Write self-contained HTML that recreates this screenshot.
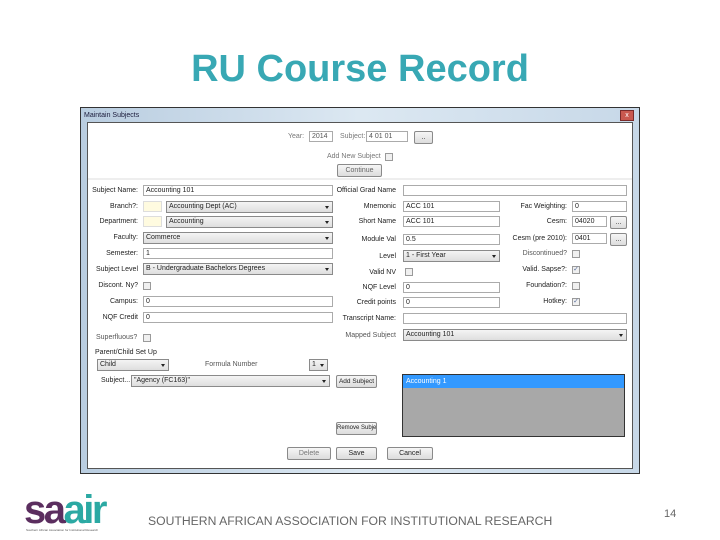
<!DOCTYPE html>
<html><head><style>
body{margin:0;width:720px;height:540px;background:#fff;position:relative;overflow:hidden;font-family:"Liberation Sans",sans-serif}
.a{position:absolute}
.t{position:absolute;font-size:7px;color:#222;white-space:nowrap;line-height:8px}
.r{text-align:right}
.i{position:absolute;border:1px solid #ababab;background:#fff;height:11px;box-sizing:border-box;font-size:7px;line-height:9px;padding-left:2px;color:#222;white-space:nowrap;overflow:hidden}
.s{position:absolute;border:1px solid #8a8a8a;background:linear-gradient(#f4f4f4,#dedede);height:12px;box-sizing:border-box;font-size:7px;line-height:10px;padding-left:2px;color:#222;white-space:nowrap;overflow:hidden}
.s:after{content:"";position:absolute;right:3px;top:4px;border-left:2.5px solid transparent;border-right:2.5px solid transparent;border-top:3px solid #222}
.b{position:absolute;border:1px solid #8a8a8a;border-radius:2px;background:linear-gradient(#f6f6f6,#dcdcdc);height:13px;box-sizing:border-box;font-size:7px;line-height:11px;text-align:center;color:#222;white-space:nowrap;overflow:hidden}
.c{position:absolute;width:8px;height:8px;border:1px solid #9a9a9a;background:#f0f0f0;box-sizing:border-box;font-size:7px;line-height:6px;text-align:center;color:#5a6e9a}
</style></head><body>
<div class="a" style="left:0;top:48px;width:720px;text-align:center;font-size:38px;font-weight:bold;color:#38a8b4">RU Course Record</div>

<!-- window -->
<div class="a" style="left:80px;top:107px;width:560px;height:367px;background:linear-gradient(90deg,#b9cde0,#dce8f2 50%,#c7d8e8);border:1px solid #333;box-sizing:border-box"></div>
<div class="t" style="left:84px;top:112px;color:#1a1a3a">Maintain Subjects</div>
<div class="a" style="left:620px;top:110px;width:14px;height:11px;background:#c9584f;border:1px solid #7a2a2a;box-sizing:border-box;color:#fff;font-size:7px;line-height:9px;text-align:center">x</div>
<div class="a" style="left:87px;top:122px;width:546px;height:347px;background:#fff;border:1px solid #555;box-sizing:border-box"></div>
<div class="a" style="left:88px;top:178px;width:544px;height:2px;background:#eee"></div>

<div class="t" style="left:288px;top:133px;color:#777">Year:</div>
<div class="i" style="left:309px;top:131px;width:24px;color:#555">2014</div>
<div class="t" style="left:340px;top:133px;color:#777">Subject:</div>
<div class="i" style="left:366px;top:131px;width:42px;color:#555">4 01 01</div>
<div class="b" style="left:414px;top:131px;width:19px">..</div>
<div class="t" style="left:327px;top:153px;color:#777">Add New Subject</div>
<div class="c" style="left:385px;top:153px"></div>
<div class="b" style="left:337px;top:164px;width:45px;color:#666">Continue</div>

<!-- left column -->
<div class="t r" style="left:88px;width:50px;top:187px">Subject Name:</div>
<div class="i" style="left:143px;top:185px;width:190px">Accounting 101</div>
<div class="t r" style="left:88px;width:50px;top:203px">Branch?:</div>
<div class="a" style="left:143px;top:201px;width:19px;height:11px;background:#fffbe0;border:1px solid #ddd;box-sizing:border-box"></div>
<div class="s" style="left:166px;top:201px;width:167px">Accounting Dept (AC)</div>
<div class="t r" style="left:88px;width:50px;top:218px">Department:</div>
<div class="a" style="left:143px;top:216px;width:19px;height:11px;background:#fffbe0;border:1px solid #ddd;box-sizing:border-box"></div>
<div class="s" style="left:166px;top:216px;width:167px">Accounting</div>
<div class="t r" style="left:88px;width:50px;top:234px">Faculty:</div>
<div class="s" style="left:143px;top:232px;width:190px">Commerce</div>
<div class="t r" style="left:88px;width:50px;top:250px">Semester:</div>
<div class="i" style="left:143px;top:248px;width:190px">1</div>
<div class="t r" style="left:88px;width:50px;top:266px">Subject Level</div>
<div class="s" style="left:143px;top:263px;width:190px">B - Undergraduate Bachelors Degrees</div>
<div class="t r" style="left:88px;width:50px;top:282px">Discont. Ny?</div>
<div class="c" style="left:143px;top:282px"></div>
<div class="t r" style="left:88px;width:50px;top:298px">Campus:</div>
<div class="i" style="left:143px;top:296px;width:190px">0</div>
<div class="t r" style="left:88px;width:50px;top:314px">NQF Credit</div>
<div class="i" style="left:143px;top:312px;width:190px">0</div>
<div class="t" style="left:96px;top:334px;color:#555">Superfluous?</div>
<div class="c" style="left:143px;top:334px"></div>
<div class="t" style="left:95px;top:349px">Parent/Child Set Up</div>
<div class="s" style="left:97px;top:359px;width:72px">Child</div>
<div class="t" style="left:205px;top:361px;color:#555">Formula Number</div>
<div class="s" style="left:309px;top:359px;width:19px">1</div>
<div class="t" style="left:101px;top:377px">Subject...</div>
<div class="s" style="left:131px;top:375px;width:199px">"Agency (FC163)"</div>
<div class="b" style="left:336px;top:375px;width:41px;font-size:6.5px">Add Subject</div>
<div class="b" style="left:336px;top:422px;width:41px;font-size:6px">Remove Subject</div>
<div class="a" style="left:402px;top:374px;width:223px;height:63px;background:#a8a8a8;border:1px solid #333;box-sizing:border-box"></div>
<div class="a" style="left:403px;top:375px;width:221px;height:13px;background:#3399ff;color:#fff;font-size:7px;line-height:13px;padding-left:3px;box-sizing:border-box">Accounting 1</div>
<div class="b" style="left:287px;top:447px;width:44px;color:#777">Delete</div>
<div class="b" style="left:336px;top:447px;width:41px">Save</div>
<div class="b" style="left:387px;top:447px;width:46px">Cancel</div>

<!-- middle column -->
<div class="t r" style="left:330px;width:66px;top:187px">Official Grad Name</div>
<div class="i" style="left:403px;top:185px;width:224px"></div>
<div class="t r" style="left:330px;width:66px;top:203px">Mnemonic</div>
<div class="i" style="left:403px;top:201px;width:97px">ACC 101</div>
<div class="t r" style="left:330px;width:66px;top:218px">Short Name</div>
<div class="i" style="left:403px;top:216px;width:97px">ACC 101</div>
<div class="t r" style="left:330px;width:66px;top:236px">Module Val</div>
<div class="i" style="left:403px;top:234px;width:97px">0.5</div>
<div class="t r" style="left:330px;width:66px;top:253px">Level</div>
<div class="s" style="left:403px;top:250px;width:97px">1 - First Year</div>
<div class="t r" style="left:330px;width:66px;top:269px">Valid NV</div>
<div class="c" style="left:405px;top:268px"></div>
<div class="t r" style="left:330px;width:66px;top:284px">NQF Level</div>
<div class="i" style="left:403px;top:282px;width:97px">0</div>
<div class="t r" style="left:330px;width:66px;top:299px">Credit points</div>
<div class="i" style="left:403px;top:297px;width:97px">0</div>
<div class="t r" style="left:330px;width:66px;top:315px">Transcript Name:</div>
<div class="i" style="left:403px;top:313px;width:224px"></div>
<div class="t r" style="left:330px;width:66px;top:332px;color:#555">Mapped Subject</div>
<div class="s" style="left:403px;top:329px;width:224px">Accounting 101</div>

<!-- right column -->
<div class="t r" style="left:500px;width:67px;top:203px">Fac Weighting:</div>
<div class="i" style="left:572px;top:201px;width:55px">0</div>
<div class="t r" style="left:500px;width:67px;top:218px">Cesm:</div>
<div class="i" style="left:572px;top:216px;width:35px">04020</div>
<div class="b" style="left:610px;top:216px;width:17px">...</div>
<div class="t r" style="left:500px;width:67px;top:235px">Cesm (pre 2010):</div>
<div class="i" style="left:572px;top:233px;width:35px">0401</div>
<div class="b" style="left:610px;top:233px;width:17px">...</div>
<div class="t r" style="left:500px;width:67px;top:250px;color:#555">Discontinued?</div>
<div class="c" style="left:572px;top:250px"></div>
<div class="t r" style="left:500px;width:67px;top:266px">Valid. Sapse?:</div>
<div class="c" style="left:572px;top:266px">✓</div>
<div class="t r" style="left:500px;width:67px;top:282px">Foundation?:</div>
<div class="c" style="left:572px;top:282px"></div>
<div class="t r" style="left:500px;width:67px;top:298px">Hotkey:</div>
<div class="c" style="left:572px;top:298px">✓</div>

<!-- footer -->
<div class="a" style="left:24px;top:490px;font-size:40px;font-weight:bold;letter-spacing:-2.5px;line-height:40px"><span style="color:#5b2e5f">sa</span><span style="color:#2ba9a3">air</span></div>
<div class="a" style="left:26px;top:528px;font-size:3px;color:#555;white-space:nowrap">Southern African Association for Institutional Research</div>
<div class="a" style="left:148px;top:514px;font-size:12.2px;color:#666;white-space:nowrap">SOUTHERN AFRICAN ASSOCIATION FOR INSTITUTIONAL RESEARCH</div>
<div class="a" style="left:664px;top:508px;font-size:11px;color:#666">14</div>
</body></html>
